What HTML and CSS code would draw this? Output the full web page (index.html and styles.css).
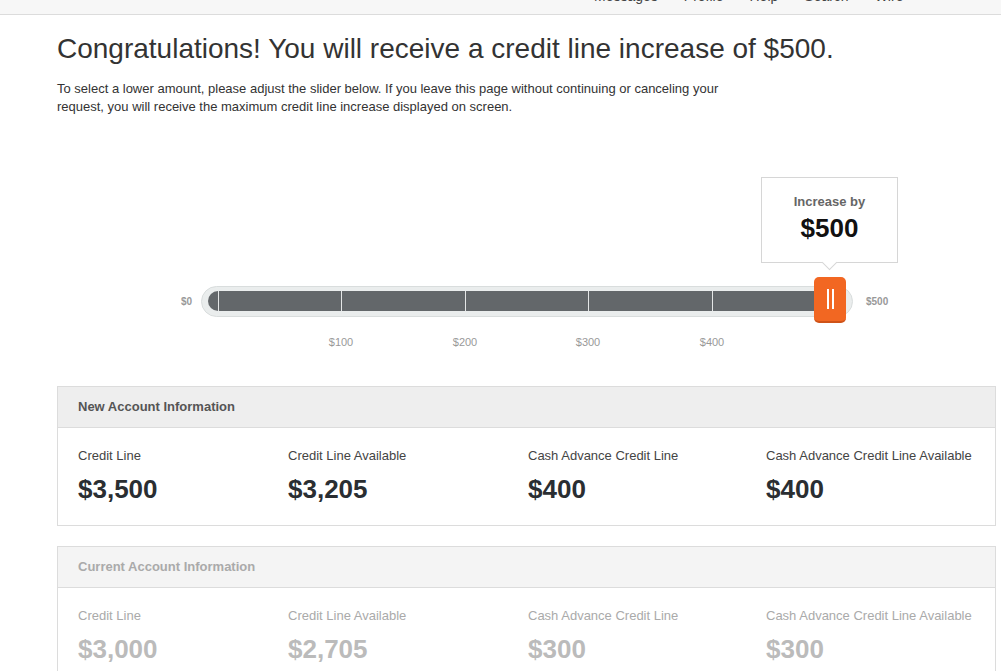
FILE: index.html
```html
<!DOCTYPE html>
<html lang="en">
<head>
<meta charset="UTF-8" />
<meta name="viewport" content="width=device-width, initial-scale=1" />
<title>Credit Line Increase</title>
<link rel="stylesheet" href="styles.css">
</head>
<body>
<div class="topbar">
  <ul class="topnav">
    <li>Messages</li>
    <li>Profile</li>
    <li>Help</li>
    <li>Search</li>
    <li>Wire</li>
  </ul>
</div>

<div class="page">
  <h1>Congratulations! You will receive a credit line increase of $500.</h1>
  <p class="intro">To select a lower amount, please adjust the slider below. If you leave this page without continuing or canceling your<br>request, you will receive the maximum credit line increase displayed on screen.</p>

  <div class="slider">
    <div class="slider-row">
      <span class="end-label">$0</span>
      <div class="track">
        <div class="fill">
          <span class="tick" style="left: 10px"></span>
          <span class="tick" style="left: 133px"></span>
          <span class="tick" style="left: 257px"></span>
          <span class="tick" style="left: 380px"></span>
          <span class="tick" style="left: 504px"></span>
        </div>
        <div class="bubble">
          <div class="bubble-title">Increase by</div>
          <div class="bubble-value">$500</div>
        </div>
        <div class="handle"><span></span><span></span></div>
      </div>
      <span class="end-label">$500</span>
    </div>
    <div class="scale">
      <span style="left: 140px">$100</span>
      <span style="left: 264px">$200</span>
      <span style="left: 387px">$300</span>
      <span style="left: 511px">$400</span>
    </div>
  </div>

  <div class="panel">
    <div class="panel-head">New Account Information</div>
    <div class="panel-body">
      <div class="stat"><div class="stat-label">Credit Line</div><div class="stat-value">$3,500</div></div>
      <div class="stat"><div class="stat-label">Credit Line Available</div><div class="stat-value">$3,205</div></div>
      <div class="stat"><div class="stat-label">Cash Advance Credit Line</div><div class="stat-value">$400</div></div>
      <div class="stat"><div class="stat-label">Cash Advance Credit Line Available</div><div class="stat-value">$400</div></div>
    </div>
  </div>

  <div class="panel muted">
    <div class="panel-head">Current Account Information</div>
    <div class="panel-body">
      <div class="stat"><div class="stat-label">Credit Line</div><div class="stat-value">$3,000</div></div>
      <div class="stat"><div class="stat-label">Credit Line Available</div><div class="stat-value">$2,705</div></div>
      <div class="stat"><div class="stat-label">Cash Advance Credit Line</div><div class="stat-value">$300</div></div>
      <div class="stat"><div class="stat-label">Cash Advance Credit Line Available</div><div class="stat-value">$300</div></div>
    </div>
  </div>
</div>
</body>
</html>
```

FILE: styles.css
```css
body {
  margin: 0; background: #fff; color: #333;
  font-family: "Liberation Sans", Arial, Helvetica, sans-serif;
}
.topbar {
  height: 14px; background: #f7f7f7; border-bottom: 1px solid #dcdcdc; overflow: hidden;
}
.topnav {
  list-style: none; margin: -11px 0 0 594px; padding: 0;
  display: flex; gap: 26px; font-size: 14px; line-height: 14px; color: #444;
}
.page {
  padding: 0 5px 0 57px;
}
h1 {
  font-weight: normal; font-size: 28px; line-height: 32px; color: #333;
  margin: 18px 0 0;
}
.intro {
  font-size: 13px; line-height: 18px; color: #333; margin: 15px 0 0;
}
.slider {
  margin-top: 61px; padding-left: 124px;
}
.slider-row {
  display: flex; align-items: center; padding-top: 109px;
}
.end-label {
  font-size: 10px; font-weight: bold; color: #999; width: 20px;
}
.end-label:last-child {
  margin-left: 13px;
}
.track {
  position: relative; width: 650px; height: 29px;
  background: #eaeded; border: 1px solid #d9dddd; border-radius: 16px;
}
.fill {
  position: absolute; left: 6px; top: 4px; width: 612px; height: 20px;
  background: #63676a; border-radius: 10px 0 0 10px;
}
.tick {
  position: absolute; top: 0; width: 1px; height: 20px; background: #e4e6e6;
}
.handle {
  position: absolute; left: 612px; top: -10px; width: 32px; height: 46px;
  background: #f26722; border-bottom: 2px solid #cf5318; border-radius: 5px;
  display: flex; justify-content: center; gap: 3px; padding-top: 12px; box-sizing: border-box;
}
.handle span {
  width: 2px; height: 20px; background: #fff;
}
.bubble {
  position: absolute; left: 559px; top: -110px; width: 135px; height: 84px;
  background: #fff; border: 1px solid #d6d6d6; text-align: center;
}
.bubble::after {
  content: ""; position: absolute; left: 62px; bottom: -6px; width: 10px; height: 10px;
  background: #fff; border-right: 1px solid #d6d6d6; border-bottom: 1px solid #d6d6d6;
  transform: rotate(45deg);
}
.bubble-title {
  font-size: 13px; font-weight: bold; color: #666; margin-top: 16px;
}
.bubble-value {
  font-size: 26px; font-weight: bold; color: #111; margin-top: 4px;
}
.scale {
  position: relative; height: 14px; margin-top: 19px; margin-left: 20px;
}
.scale span {
  position: absolute; top: 0; font-size: 11px; color: #999; transform: translateX(-50%);
}
.panel {
  border: 1px solid #dcdcdc; margin-top: 36px;
}
.panel + .panel {
  margin-top: 20px;
}
.panel-head {
  background: #eee; border-bottom: 1px solid #dcdcdc; height: 40px; line-height: 40px;
  padding-left: 20px; font-size: 13px; font-weight: bold; color: #555;
}
.panel-body {
  display: grid; grid-template-columns: 210px 240px 238px 1fr;
  padding: 20px 0 20px 20px;
}
.stat-label {
  font-size: 13px; color: #444;
}
.stat-value {
  font-size: 26px; font-weight: bold; color: #2a2e32; margin-top: 11px;
}
.muted .panel-head {
  background: #f4f4f4; color: #aaa;
}
.muted .stat-label {
  color: #aaa;
}
.muted .stat-value {
  color: #bbb;
}
```
